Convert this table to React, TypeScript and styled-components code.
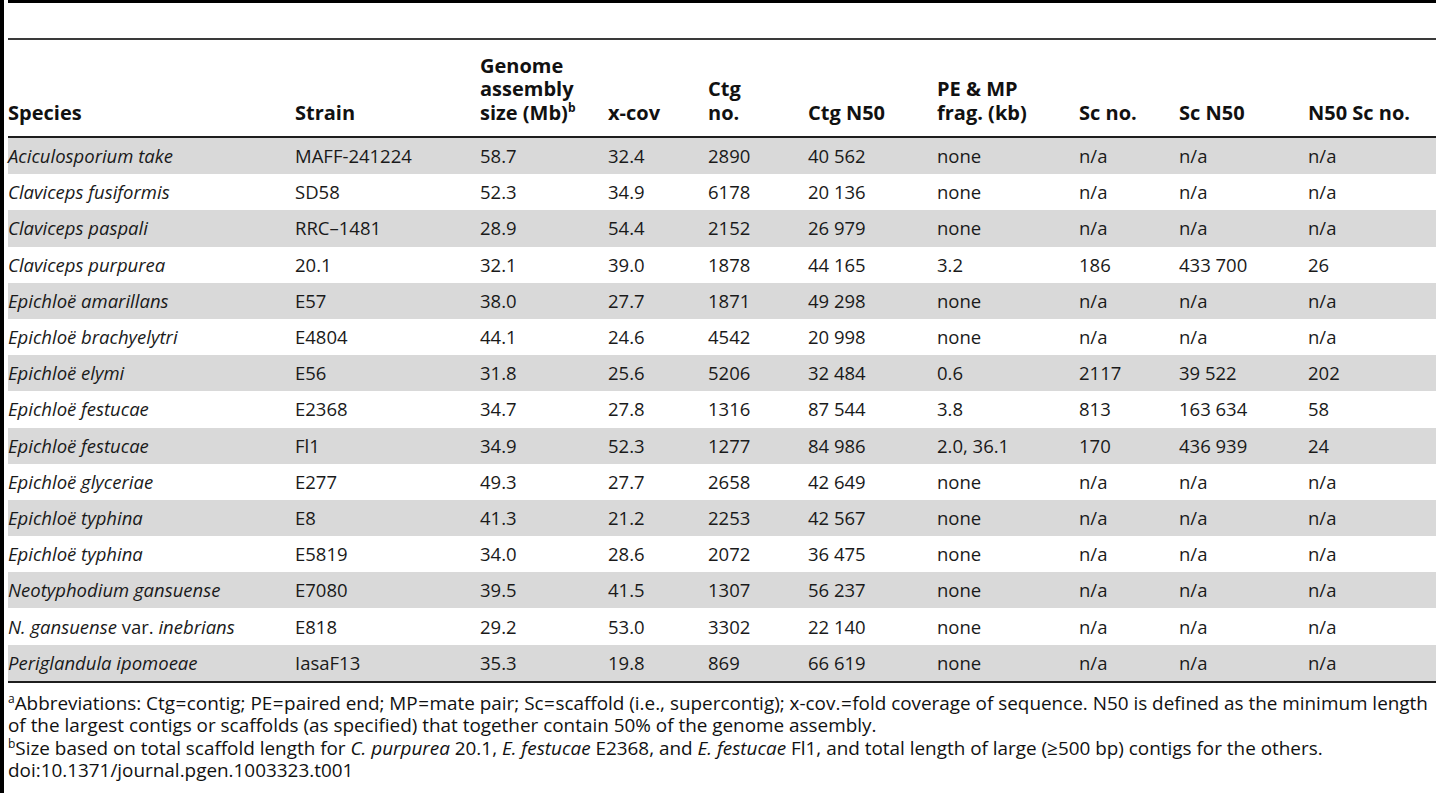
import styled, { createGlobalStyle } from "styled-components";

interface IRow {
  species: React.ReactNode;
  strain: string;
  size: string;
  cov: string;
  ctgNo: string;
  ctgN50: string;
  frag: string;
  scNo: string;
  scN50: string;
  n50ScNo: string;
}

const GlobalStyle = createGlobalStyle`
  html, body {
    margin: 0;
    padding: 0;
    background: #ffffff;
  }
  body {
    font-family: "Open Sans", "Liberation Sans", sans-serif;
    color: #111;
  }
`;

const COLS = "287px 185px 128px 100px 100px 129px 142px 100px 129px 1fr";

const Frame = styled.div`
  width: 1436px;
  height: 793px;
  border-left: 4px solid #000;
  box-sizing: border-box;
  padding-left: 4px;
  overflow: hidden;
`;

const TopRule = styled.div`
  height: 40px;
  border-top: 3px solid #000;
  border-bottom: 2px solid #3a3a3a;
  box-sizing: border-box;
`;

const HeadRow = styled.div`
  display: grid;
  grid-template-columns: ${COLS};
  align-items: end;
  height: 98px;
  box-sizing: border-box;
  padding-bottom: 12px;
  border-bottom: 2px solid #1e1e1e;
`;

const HeadCell = styled.div`
  font-weight: 700;
  font-size: 20px;
  line-height: 23.5px;
  color: #111;
  white-space: nowrap;
  sup {
    font-size: 12px;
    line-height: 0;
    vertical-align: 8px;
  }
`;

const Row = styled.div<{ $shade: boolean }>`
  display: grid;
  grid-template-columns: ${COLS};
  align-items: center;
  height: 36.2px;
  background: ${(p) => (p.$shade ? "#d9d9d9" : "#ffffff")};
`;

const Cell = styled.div`
  font-size: 18.5px;
  line-height: 22px;
  color: #1a1a1a;
  white-space: nowrap;
  em {
    font-style: italic;
  }
`;

const BottomRule = styled.div`
  border-top: 2px solid #1e1e1e;
`;

const Notes = styled.div`
  padding-top: 9px;
  font-size: 18.9px;
  line-height: 22.5px;
  color: #111;
  sup {
    font-size: 12px;
    line-height: 0;
    vertical-align: 7px;
  }
`;

const Note = styled.div`
  white-space: nowrap;
`;

const Eq = styled.span`
  margin: 0 0.5px;
`;

const rows: IRow[] = [
  { species: <em>Aciculosporium take</em>, strain: "MAFF-241224", size: "58.7", cov: "32.4", ctgNo: "2890", ctgN50: "40 562", frag: "none", scNo: "n/a", scN50: "n/a", n50ScNo: "n/a" },
  { species: <em>Claviceps fusiformis</em>, strain: "SD58", size: "52.3", cov: "34.9", ctgNo: "6178", ctgN50: "20 136", frag: "none", scNo: "n/a", scN50: "n/a", n50ScNo: "n/a" },
  { species: <em>Claviceps paspali</em>, strain: "RRC–1481", size: "28.9", cov: "54.4", ctgNo: "2152", ctgN50: "26 979", frag: "none", scNo: "n/a", scN50: "n/a", n50ScNo: "n/a" },
  { species: <em>Claviceps purpurea</em>, strain: "20.1", size: "32.1", cov: "39.0", ctgNo: "1878", ctgN50: "44 165", frag: "3.2", scNo: "186", scN50: "433 700", n50ScNo: "26" },
  { species: <em>Epichloë amarillans</em>, strain: "E57", size: "38.0", cov: "27.7", ctgNo: "1871", ctgN50: "49 298", frag: "none", scNo: "n/a", scN50: "n/a", n50ScNo: "n/a" },
  { species: <em>Epichloë brachyelytri</em>, strain: "E4804", size: "44.1", cov: "24.6", ctgNo: "4542", ctgN50: "20 998", frag: "none", scNo: "n/a", scN50: "n/a", n50ScNo: "n/a" },
  { species: <em>Epichloë elymi</em>, strain: "E56", size: "31.8", cov: "25.6", ctgNo: "5206", ctgN50: "32 484", frag: "0.6", scNo: "2117", scN50: "39 522", n50ScNo: "202" },
  { species: <em>Epichloë festucae</em>, strain: "E2368", size: "34.7", cov: "27.8", ctgNo: "1316", ctgN50: "87 544", frag: "3.8", scNo: "813", scN50: "163 634", n50ScNo: "58" },
  { species: <em>Epichloë festucae</em>, strain: "Fl1", size: "34.9", cov: "52.3", ctgNo: "1277", ctgN50: "84 986", frag: "2.0, 36.1", scNo: "170", scN50: "436 939", n50ScNo: "24" },
  { species: <em>Epichloë glyceriae</em>, strain: "E277", size: "49.3", cov: "27.7", ctgNo: "2658", ctgN50: "42 649", frag: "none", scNo: "n/a", scN50: "n/a", n50ScNo: "n/a" },
  { species: <em>Epichloë typhina</em>, strain: "E8", size: "41.3", cov: "21.2", ctgNo: "2253", ctgN50: "42 567", frag: "none", scNo: "n/a", scN50: "n/a", n50ScNo: "n/a" },
  { species: <em>Epichloë typhina</em>, strain: "E5819", size: "34.0", cov: "28.6", ctgNo: "2072", ctgN50: "36 475", frag: "none", scNo: "n/a", scN50: "n/a", n50ScNo: "n/a" },
  { species: <em>Neotyphodium gansuense</em>, strain: "E7080", size: "39.5", cov: "41.5", ctgNo: "1307", ctgN50: "56 237", frag: "none", scNo: "n/a", scN50: "n/a", n50ScNo: "n/a" },
  {
    species: (
      <>
        <em>N. gansuense</em> var. <em>inebrians</em>
      </>
    ),
    strain: "E818", size: "29.2", cov: "53.0", ctgNo: "3302", ctgN50: "22 140", frag: "none", scNo: "n/a", scN50: "n/a", n50ScNo: "n/a",
  },
  { species: <em>Periglandula ipomoeae</em>, strain: "IasaF13", size: "35.3", cov: "19.8", ctgNo: "869", ctgN50: "66 619", frag: "none", scNo: "n/a", scN50: "n/a", n50ScNo: "n/a" },
];

function App() {
  return (
    <>
      <GlobalStyle />
      <Frame>
        <TopRule />
        <HeadRow>
          <HeadCell>Species</HeadCell>
          <HeadCell>Strain</HeadCell>
          <HeadCell>
            Genome
            <br />
            assembly
            <br />
            size (Mb)<sup>b</sup>
          </HeadCell>
          <HeadCell>x-cov</HeadCell>
          <HeadCell>
            Ctg
            <br />
            no.
          </HeadCell>
          <HeadCell>Ctg N50</HeadCell>
          <HeadCell>
            PE &amp; MP
            <br />
            frag. (kb)
          </HeadCell>
          <HeadCell>Sc no.</HeadCell>
          <HeadCell>Sc N50</HeadCell>
          <HeadCell>N50 Sc no.</HeadCell>
        </HeadRow>
        {rows.map((r, i) => (
          <Row key={i} $shade={i % 2 === 0}>
            <Cell>{r.species}</Cell>
            <Cell>{r.strain}</Cell>
            <Cell>{r.size}</Cell>
            <Cell>{r.cov}</Cell>
            <Cell>{r.ctgNo}</Cell>
            <Cell>{r.ctgN50}</Cell>
            <Cell>{r.frag}</Cell>
            <Cell>{r.scNo}</Cell>
            <Cell>{r.scN50}</Cell>
            <Cell>{r.n50ScNo}</Cell>
          </Row>
        ))}
        <BottomRule />
        <Notes>
          <Note>
            <sup>a</sup>Abbreviations: Ctg<Eq>=</Eq>contig; PE<Eq>=</Eq>paired end; MP<Eq>=</Eq>mate pair; Sc<Eq>=</Eq>scaffold (i.e., supercontig); x-cov.<Eq>=</Eq>fold coverage of sequence. N50 is defined as the minimum length
          </Note>
          <Note>of the largest contigs or scaffolds (as specified) that together contain 50% of the genome assembly.</Note>
          <Note>
            <sup>b</sup>Size based on total scaffold length for <em>C. purpurea</em> 20.1, <em>E. festucae</em> E2368, and <em>E. festucae</em> Fl1, and total length of large (≥500 bp) contigs for the others.
          </Note>
          <Note>doi:10.1371/journal.pgen.1003323.t001</Note>
        </Notes>
      </Frame>
    </>
  );
}

export default App;
